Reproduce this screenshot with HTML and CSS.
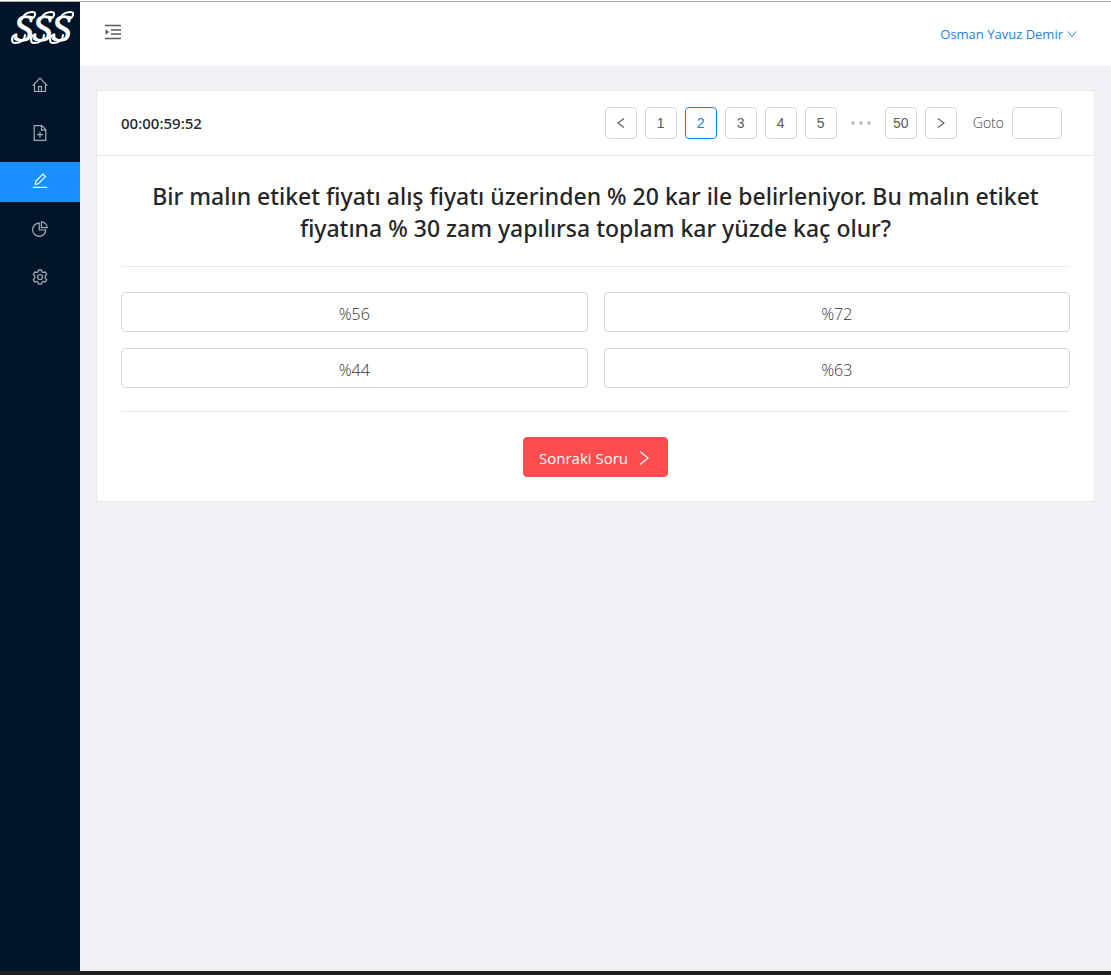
FILE: index.html
```html
<!DOCTYPE html>
<html lang="tr">
<head>
<meta charset="utf-8">
<meta name="viewport" content="width=device-width, initial-scale=1">
<title>SSS</title>
<link rel="stylesheet" href="styles.css">
</head>
<body>
<div class="app">
  <aside class="sidebar">
    <svg class="logo" viewBox="0 0 80 60" role="img" aria-label="SSS">
      <defs>
        <g id="curls">
          <path d="M22 17C24 10 33 9 35 11C36 14 33 17 30 17M25 33C25 38 20 41 15 41C11 41 11 35 15 33"/>
        </g>
      </defs>
      <text class="logo-text" x="14" y="39">SSS</text>
      <g class="logo-curls"><use href="#curls"/><use href="#curls" x="19"/><use href="#curls" x="38"/></g>
    </svg>
    <nav class="menu">
      <a class="menu-item" href="#" aria-label="Ana sayfa"><svg class="icon" viewBox="0 0 16 16"><path d="M.7 8.7 8 1.2l7.3 7.5M2.5 7v7.5h11V7M6.5 14.5V9.7h3v4.8"/></svg></a>
      <a class="menu-item" href="#" aria-label="Yeni"><svg class="icon" viewBox="0 0 16 16"><path d="M2.2.7h7.6l4 4v10.6H2.2zM9.5.9v4.2h4.1M8 6.7v6M5 9.7h6"/></svg></a>
      <a class="menu-item active" href="#" aria-label="Sınav"><svg class="icon" viewBox="0 0 16 16"><path d="M.8 14.3h14.4M3.2 11.3l.7-3.2 7.1-7 2.5 2.5-7.1 7z"/></svg></a>
      <a class="menu-item" href="#" aria-label="Raporlar"><svg class="icon" viewBox="0 0 16 16"><path d="M7.2 2.1A6.6 6.6 0 1 0 13.8 9H7.2zM9.4.8v5.9h5.9A6 6 0 0 0 9.4.8z"/></svg></a>
      <a class="menu-item" href="#" aria-label="Ayarlar"><svg class="icon" viewBox="0 0 16 16"><path d="M6.6.8h2.8l.5 2 1.4.8 2-.6 1.4 2.4L13.2 7v2l1.5 1.6-1.4 2.4-2-.6-1.4.8-.5 2H6.6l-.5-2-1.4-.8-2 .6-1.4-2.4L2.8 9V7L1.3 5.4 2.7 3l2 .6 1.4-.8z"/><circle cx="8" cy="8" r="2.5"/></svg></a>
    </nav>
  </aside>
  <div class="main">
    <header class="topbar">
      <button class="toggle" type="button" aria-label="Menüyü aç"><svg class="toggle-icon" viewBox="0 0 16 16"><path d="M0 1.5h16M6 6h10M6 10h10M0 14.5h16"/><path class="solid" d="M.5 5v6L4 8z"/></svg></button>
      <a class="user" href="#">Osman Yavuz Demir <svg class="caret" viewBox="0 0 10 10"><path d="M1 2.5l4 5 4-5"/></svg></a>
    </header>
    <main class="content">
      <section class="card">
        <div class="card-head">
          <div class="timer">00:00:59:52</div>
          <nav class="pager" aria-label="Sorular">
            <button class="page" type="button" aria-label="Önceki"><svg class="arrow" viewBox="0 0 12 12"><path d="M9 1.5 3 6l6 4.5"/></svg></button>
            <button class="page" type="button">1</button>
            <button class="page current" type="button" aria-current="page">2</button>
            <button class="page" type="button">3</button>
            <button class="page" type="button">4</button>
            <button class="page" type="button">5</button>
            <span class="ellipsis"><i class="dot"></i><i class="dot"></i><i class="dot"></i></span>
            <button class="page" type="button">50</button>
            <button class="page" type="button" aria-label="Sonraki"><svg class="arrow" viewBox="0 0 12 12"><path d="m3 1.5 6 4.5-6 4.5"/></svg></button>
            <label class="goto">Goto <input class="goto-input" type="text"></label>
          </nav>
        </div>
        <div class="card-body">
          <h1 class="question">Bir malın etiket fiyatı alış fiyatı üzerinden % 20 kar ile belirleniyor. Bu malın etiket fiyatına % 30 zam yapılırsa toplam kar yüzde kaç olur?</h1>
          <div class="answers">
            <button class="answer" type="button">%56</button>
            <button class="answer" type="button">%72</button>
            <button class="answer" type="button">%44</button>
            <button class="answer" type="button">%63</button>
          </div>
          <button class="next" type="button">Sonraki Soru <svg class="next-icon" viewBox="0 0 16 16"><path d="m4 1.5 8 6.5-8 6.5"/></svg></button>
        </div>
      </section>
    </main>
  </div>
</div>
</body>
</html>
```
FILE: styles.css
```css
* { box-sizing: border-box; }
body {
  margin: 0;
  padding-top: 1px;
  min-height: 100vh;
  display: flex;
  flex-direction: column;
  background: #fff;
  color: #595959;
  font: 14px/22px "Open Sans", "Noto Sans", sans-serif;
}
button, input { font: inherit; color: inherit; margin: 0; }
svg { fill: none; stroke: currentColor; display: block; }
a { text-decoration: none; }
.app {
  flex: 1;
  display: flex;
  border-top: 1px solid #adadad;
  border-bottom: 4px solid #1f1f1f;
}
.sidebar { flex: none; width: 80px; background: #001529; }
.logo { width: 80px; height: 60px; color: #fff; }
.logo-text { font: italic 400 38px "Liberation Serif", serif; fill: #fff; stroke: #fff; stroke-width: 1; }
.logo-curls { stroke-width: 2; stroke-linecap: round; }
.menu { display: flex; flex-direction: column; gap: 8px; padding-top: 4px; }
.menu-item {
  height: 40px;
  padding-bottom: 2px;
  display: flex;
  align-items: center;
  justify-content: center;
  color: #a6adb4;
}
.menu-item.active { background: #1890ff; color: #fff; }
.icon { width: 16px; height: 16px; stroke-width: 1.2; }
.main { flex: 1; min-width: 0; background: #f0f2f5; }
.topbar {
  height: 64px;
  padding: 0 34px 0 24px;
  display: flex;
  align-items: center;
  justify-content: space-between;
  background: #fff;
}
.toggle { border: 0; padding: 0 0 4px; background: none; }
.toggle-icon { width: 18px; height: 16px; stroke-width: 1.3; }
.solid { fill: currentColor; stroke: none; }
.user { display: flex; align-items: center; gap: 4px; color: #1c7fe0; font-size: 13px; }
.caret { width: 10px; height: 10px; }
.content { padding: 24px 16px; }
.card { background: #fff; border: 1px solid #e8e8e8; }
.card-head {
  min-height: 65px;
  padding: 0 32px 0 24px;
  display: flex;
  align-items: center;
  justify-content: space-between;
  border-bottom: 1px solid #e8e8e8;
}
.timer { color: #262626; font-family: "Noto Sans", sans-serif; font-size: 15px; font-weight: 500; }
.pager { display: flex; align-items: center; gap: 8px; }
.page {
  width: 32px;
  height: 32px;
  padding: 0;
  display: flex;
  align-items: center;
  justify-content: center;
  border: 1px solid #d9d9d9;
  border-radius: 4px;
  background: #fff;
  font: 14px/30px "Liberation Sans", Arial, sans-serif;
}
.page.current { border-color: #1c7fe0; color: #1c7fe0; }
.arrow { width: 12px; height: 12px; stroke-width: 1.1; }
.ellipsis { width: 32px; display: flex; justify-content: center; gap: 4px; }
.dot { width: 4px; height: 4px; border-radius: 50%; background: #c4c4c4; }
.goto { display: flex; align-items: center; gap: 8px; padding-left: 8px; color: #404040; font-weight: 300; }
.goto-input { width: 50px; height: 32px; border: 1px solid #d9d9d9; border-radius: 4px; background: #fff; padding: 4px 11px; }
.card-body { padding: 24px; display: flex; flex-direction: column; align-items: center; }
.question {
  margin: 0 0 22px;
  color: #262626;
  font-family: "Noto Sans", sans-serif;
  font-size: 23px;
  line-height: 32px;
  font-weight: 500;
  text-align: center;
}
.answers {
  width: 100%;
  padding: 25px 0 23px;
  margin-bottom: 25px;
  display: grid;
  grid-template-columns: 1fr 1fr;
  gap: 16px;
  border-top: 1px solid #e8e8e8;
  border-bottom: 1px solid #e8e8e8;
}
.answer {
  height: 40px;
  padding: 3px 15px 0;
  border: 1px solid #d9d9d9;
  border-radius: 4px;
  background: #fff;
  color: #333;
  font-size: 16px;
  font-weight: 300;
}
.next {
  height: 40px;
  padding: 2px 15px 0;
  display: flex;
  align-items: center;
  gap: 8px;
  border: 1px solid #ff4d4f;
  border-radius: 4px;
  background: #ff4d4f;
  color: #fff;
  font-size: 15px;
}
.next-icon { width: 16px; height: 16px; stroke-width: 1.3; }
```
